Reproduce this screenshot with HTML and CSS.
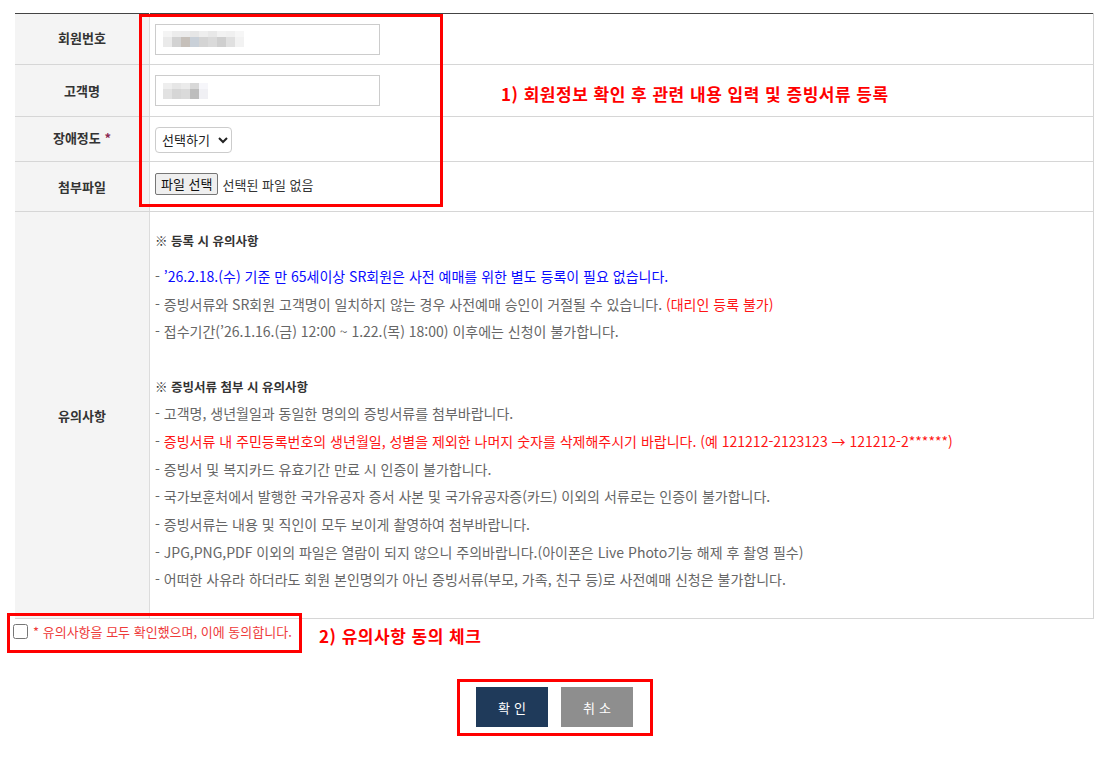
FILE: index.html
```html
<!DOCTYPE html>
<html lang="ko">
<head>
  <meta charset="UTF-8">
  <title>증빙서류 등록</title>
  <meta name="viewport" content="width=device-width, initial-scale=1.0">
  <link rel="stylesheet" href="styles.css">
</head>
<body>

  <div class="page">
    <table class="form-tbl">
      <tr class="r1">
        <th>회원번호</th>
        <td><div class="inp"><span class="mosaic m1"></span></div></td>
      </tr>
      <tr class="r2">
        <th>고객명</th>
        <td><div class="inp"><span class="mosaic m2"></span></div></td>
      </tr>
      <tr class="r3">
        <th>장애정도 <span class="req">*</span></th>
        <td>
          <select class="sel">
            <option>선택하기</option>
          </select>
        </td>
      </tr>
      <tr class="r4">
        <th>첨부파일</th>
        <td><span class="file-btn">파일 선택</span><span class="file-name">선택된 파일 없음</span></td>
      </tr>
      <tr class="r5">
        <th>유의사항</th>
        <td class="notice">
          <p class="tit">※ 등록 시 유의사항</p>
          <ul class="list first">
            <li>- <span class="blue">’26.2.18.(수) 기준 만 65세이상 SR회원은 사전 예매를 위한 별도 등록이 필요 없습니다.</span></li>
            <li>- 증빙서류와 SR회원 고객명이 일치하지 않는 경우 사전예매 승인이 거절될 수 있습니다. <span class="red">(대리인 등록 불가)</span></li>
            <li>- 접수기간(’26.1.16.(금) 12:00 ~ 1.22.(목) 18:00) 이후에는 신청이 불가합니다.</li>
          </ul>
          <p class="tit second">※ 증빙서류 첨부 시 유의사항</p>
          <ul class="list">
            <li>- 고객명, 생년월일과 동일한 명의의 증빙서류를 첨부바랍니다.</li>
            <li>- <span class="red">증빙서류 내 주민등록번호의 생년월일, 성별을 제외한 나머지 숫자를 삭제해주시기 바랍니다. (예 121212-2123123 → 121212-2******)</span></li>
            <li>- 증빙서 및 복지카드 유효기간 만료 시 인증이 불가합니다.</li>
            <li>- 국가보훈처에서 발행한 국가유공자 증서 사본 및 국가유공자증(카드) 이외의 서류로는 인증이 불가합니다.</li>
            <li>- 증빙서류는 내용 및 직인이 모두 보이게 촬영하여 첨부바랍니다.</li>
            <li>- JPG,PNG,PDF 이외의 파일은 열람이 되지 않으니 주의바랍니다.(아이폰은 Live Photo기능 해제 후 촬영 필수)</li>
            <li>- 어떠한 사유라 하더라도 회원 본인명의가 아닌 증빙서류(부모, 가족, 친구 등)로 사전예매 신청은 불가합니다.</li>
          </ul>
        </td>
      </tr>
    </table>

    <div class="agree">
      <input type="checkbox" id="agreeChk">
      <label for="agreeChk">* 유의사항을 모두 확인했으며, 이에 동의합니다.</label>
    </div>

    <div class="btns">
      <button class="btn ok">확인</button>
      <button class="btn cancel">취소</button>
    </div>

    <!-- 안내용 표시 -->
    <div class="mark mark1"></div>
    <div class="mark mark2"></div>
    <div class="mark mark3"></div>
    <p class="note note1">1) 회원정보 확인 후 관련 내용 입력 및 증빙서류 등록</p>
    <p class="note note2">2) 유의사항 동의 체크</p>
  </div>

</body>
</html>
```

FILE: styles.css
```css
body {
  margin: 0;
  font-family: "Noto Sans CJK KR", "Noto Sans", sans-serif;
  color: #333;
  background: #fff;
}
.page {
  position: relative;
  padding: 13px 15px 30px 15px;
}
.form-tbl {
  width: 100%;
  border-collapse: collapse;
  border-top: 1px solid #444;
  border-right: 1px solid #d4d4d4;
}
.form-tbl th {
  width: 134px;
  padding: 0;
  background: #f4f4f4;
  font-size: 13px;
  font-weight: bold;
  color: #333;
  text-align: center;
  border-bottom: 1px solid #d6d6d6;
  border-right: 1px solid #dcdcdc;
}
.form-tbl td {
  padding: 0 5px;
  border-bottom: 1px solid #d6d6d6;
  vertical-align: middle;
}
.r1 th { height: 47px; padding-bottom: 3px; }
.r2 th { height: 51px; }
.r3 th { height: 41px; padding-bottom: 3px; }
.r4 th { height: 49px; }
.r5 th { height: 406px; }
.req {
  color: #8b2a55;
}
.inp {
  width: 225px;
  height: 31px;
  box-sizing: border-box;
  border: 1px solid #ccc;
  display: flex;
  align-items: center;
  padding-left: 7px;
}
.mosaic {
  display: block;
  height: 16px;
  background-repeat: no-repeat;
  background-size: 100% 6px, 100% 10px;
  background-position: 0 0, 0 6px;
}
.m1 {
  width: 81px;
  background-image:
    linear-gradient(90deg, #f4f4f4 0 9px, #ececec 9px 18px, #ebebeb 18px 27px, #e6e6e6 27px 36px, #eeeeee 36px 45px, #e8e8e8 45px 54px, #f2f2f2 54px 63px, #f0f0f0 63px 72px, #f6f6f6 72px 81px),
    linear-gradient(90deg, #eaeaea 0 9px, #d2d2d2 9px 18px, #c6c0ba 18px 27px, #c9d0d8 27px 36px, #d4d4d4 36px 45px, #dadada 45px 54px, #cfcfcf 54px 63px, #e0e0e0 63px 72px, #f2f2f2 72px 81px);
}
.m2 {
  width: 45px;
  background-image:
    linear-gradient(90deg, #eeeeee 0 9px, #e6e6e6 9px 18px, #ebebeb 18px 27px, #d8d8d8 27px 36px, #f6f6fa 36px 45px),
    linear-gradient(90deg, #e2e2e2 0 9px, #d6d6d6 9px 18px, #dadada 18px 27px, #bdbdbd 27px 36px, #f0f0f4 36px 45px);
}
.sel {
  height: 26px;
  width: 77px;
  font-family: "Noto Sans CJK KR", sans-serif;
  font-size: 13px;
  color: #222;
  background: #fff;
  border: 1px solid #ccc;
  border-radius: 4px;
  padding: 0 2px;
  margin-top: 1px;
}
.r4 td {
  padding-bottom: 8px;
}
.file-btn {
  display: inline-block;
  height: 22px;
  box-sizing: border-box;
  padding: 0 5px;
  line-height: 20px;
  font-size: 13px;
  color: #111;
  background: #efefef;
  border: 1px solid #767676;
  border-radius: 2px;
  vertical-align: middle;
}
.file-name {
  margin-left: 4px;
  font-size: 13px;
  color: #333;
  vertical-align: middle;
}
.notice {
  padding: 15px 5px 21px 5px !important;
  font-size: 14px;
  color: #666;
  vertical-align: top !important;
}
.tit {
  margin: 0;
  font-size: 12.5px;
  font-weight: bold;
  color: #333;
  line-height: 28px;
}
.tit.second {
  margin-top: 28px;
  line-height: 26px;
}
.list {
  list-style: none;
  margin: 0;
  padding: 0;
}
.list.first {
  margin-top: 8px;
}
.list li {
  line-height: 27.7px;
}
.blue {
  color: #0a0aff;
}
.red {
  color: #ff1414;
}
.agree {
  display: flex;
  align-items: center;
  margin: 4px 0 0 -2px;
  height: 16px;
  font-size: 13px;
  color: #ee3a3a;
}
.agree input {
  width: 15px;
  height: 15px;
  margin: 0 5px 0 0;
}
.btns {
  display: flex;
  justify-content: center;
  gap: 13px;
  margin-top: 48px;
}
.btn {
  width: 72px;
  height: 40px;
  border: 0;
  padding: 0 0 0 4px;
  color: #fff;
  font-family: "Noto Sans CJK KR", sans-serif;
  font-size: 13px;
  letter-spacing: 4px;
  cursor: pointer;
}
.ok {
  background: #1f3a5a;
}
.cancel {
  background: #8e8e8e;
}
.mark {
  position: absolute;
  box-sizing: border-box;
  border: 3px solid #f00;
}
.mark1 {
  left: 139px;
  top: 14px;
  width: 304px;
  height: 193px;
}
.mark2 {
  left: 7px;
  top: 613px;
  width: 295px;
  height: 40px;
}
.mark3 {
  left: 457px;
  top: 679px;
  width: 196px;
  height: 57px;
}
.note {
  position: absolute;
  margin: 0;
  color: #f00;
  font-size: 17px;
  font-weight: bold;
  line-height: 20px;
  letter-spacing: 0.5px;
  white-space: nowrap;
}
.note1 {
  left: 501px;
  top: 84px;
}
.note2 {
  left: 319px;
  top: 626px;
}
```
